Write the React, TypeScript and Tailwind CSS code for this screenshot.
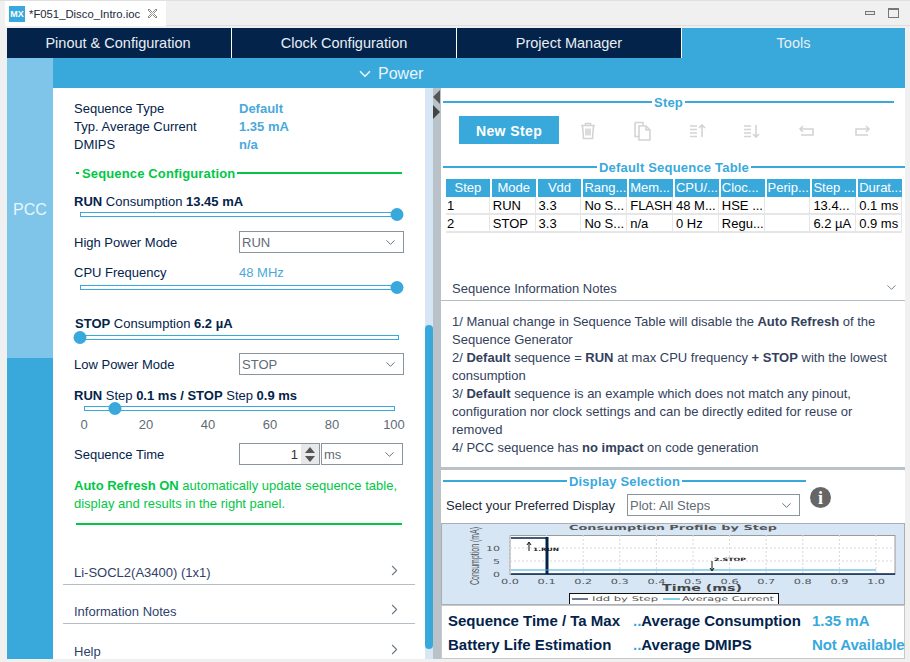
import { ChevronDown, ChevronRight } from "lucide-react";

const columns = ["Step", "Mode", "Vdd", "Rang...", "Mem...", "CPU/...", "Cloc...", "Perip...", "Step ...", "Durat..."];
const rows = [
  ["1", "RUN", "3.3", "No S...", "FLASH", "48 M...", "HSE ...", "", "13.4...", "0.1 ms"],
  ["2", "STOP", "3.3", "No S...", "n/a", "0 Hz", "Regu...", "", "6.2 µA", "0.9 ms"],
];

function Slider({ percent, className }: { percent: number; className: string }) {
  return (
    <div className={`relative h-[5px] border border-[#39a9dc] bg-white ${className}`}>
      <div
        className="absolute top-[-5px] h-[13px] w-[13px] -translate-x-1/2 rounded-full bg-[#39a9dc]"
        style={{ left: `calc(${percent} * (100% + 2px) / 100 - 1px)` }}
      />
    </div>
  );
}

function Select({ value, className }: { value: string; className: string }) {
  return (
    <div className={`flex h-[22px] items-center justify-between border border-[#8a949c] bg-white pl-[2px] pr-[5px] text-[#5f6b76] ${className}`}>
      <span className="pt-[2px]">{value}</span>
      <ChevronDown size={15} strokeWidth={1.5} className="text-[#5f6b76]" />
    </div>
  );
}

function Accordion({ label, border }: { label: string; border: boolean }) {
  return (
    <div className={`mx-[10px] flex h-[39px] items-end justify-between pb-[1px] pl-[11px] pr-[12px] ${border ? "border-b border-[#b4bec4]" : ""}`}>
      <span className="text-[#2f3f6b]">{label}</span>
      <ChevronRight size={17} strokeWidth={1.5} className="mb-[4px] text-[#6f7b85]" />
    </div>
  );
}

function Title({ text, className }: { text: string; className: string }) {
  return (
    <div className={`flex items-center ${className}`}>
      <div className="h-[2px] flex-1 bg-[#39a9dc]" />
      <span className="px-[2px] pt-[2px] font-bold tracking-[0.2px] text-[#39a9dc]">{text}</span>
      <div className="h-[2px] flex-1 bg-[#39a9dc]" />
    </div>
  );
}

function ToolIcon({ kind }: { kind: string }) {
  return (
    <svg width="20" height="20" viewBox="0 0 20 20" fill="none" stroke="#d4d4d4" strokeWidth="1.6">
      {kind === "trash" && <path d="M3 4.500h14M7.500 4.500V2.500h5v2M4.500 4.500l1 13h9l1-13M8 7.500v7M10 7.500v7M12 7.500v7" />}
      {kind === "copy" && <path d="M2 1.500h8v3M2 1.500v14h4M6 5h7l4 4v10H6zM13 5v4h4" />}
      {kind === "up" && <path d="M2 5h7M2 8.500h7M2 12h7M2 15.500h7M14 16V4M11 7l3-3 3 3" />}
      {kind === "down" && <path d="M2 5h7M2 8.500h7M2 12h7M2 15.500h7M14 4v12M11 13l3 3 3-3" />}
      {kind === "undo" && <path d="M6 5L3 8l3 3M3 8h13v6H4" />}
      {kind === "redo" && <path d="M14 5l3 3-3 3M17 8H4v6h12" />}
    </svg>
  );
}

function Chart() {
  const xTicks = Array.from({ length: 11 }, (_, i) => 68 + i * 36.6);
  return (
    <svg width="465" height="80" viewBox="0 0 465 80" className="block">
      <text x="231" y="6" textAnchor="middle" fontFamily="DejaVu Sans" fontSize="7" fontWeight="700" fill="#555" textLength="208" lengthAdjust="spacingAndGlyphs">
        Consumption Profile by Step
      </text>
      <text transform="translate(37 32) rotate(-90)" textAnchor="middle" fontFamily="Liberation Sans" fontSize="12" fill="#555" textLength="58" lengthAdjust="spacingAndGlyphs">
        Consumption (mA)
      </text>
      <rect x="68" y="11.500" width="385" height="39" fill="#fff" stroke="#9a9a9a" />
      {xTicks.map((x) => (
        <line key={x} x1={x} x2={x} y1="11" y2="50" stroke="#d8d8d8" strokeDasharray="2 2" />
      ))}
      <line x1="68" x2="453" y1="24" y2="24" stroke="#d8d8d8" strokeDasharray="2 2" />
      <line x1="68" x2="453" y1="37" y2="37" stroke="#d8d8d8" strokeDasharray="2 2" />
      <line x1="69" x2="105" y1="14" y2="14" stroke="#03234b" strokeWidth="1.500" />
      <line x1="105" x2="105" y1="13" y2="50" stroke="#03234b" strokeWidth="3" />
      <line x1="69" x2="453" y1="50" y2="50" stroke="#03234b" strokeWidth="1.500" />
      <line x1="69" x2="434" y1="46" y2="46" stroke="#39a9dc" strokeWidth="1.200" />
      <path d="M87 27V19M85 21l2-3 2 3" stroke="#111" fill="none" />
      <text x="91" y="27" fontFamily="DejaVu Sans" fontSize="4.500" fontWeight="700" fill="#222" textLength="26" lengthAdjust="spacingAndGlyphs">
        1.RUN
      </text>
      <path d="M270 37V46M268 44l2 3 2-3" stroke="#111" fill="none" />
      <text x="272" y="36.500" fontFamily="DejaVu Sans" fontSize="4.500" fontWeight="700" fill="#222" textLength="32" lengthAdjust="spacingAndGlyphs">
        2.STOP
      </text>
      {[["10", 27], ["5", 40], ["0", 53]].map(([t, y]) => (
        <text key={t} x="58" y={y} textAnchor="end" fontFamily="DejaVu Sans" fontSize="7" fill="#555" textLength={t === "10" ? 14 : 7} lengthAdjust="spacingAndGlyphs">
          {t}
        </text>
      ))}
      {xTicks.map((x, i) => (
        <text key={i} x={x} y="60" textAnchor="middle" fontFamily="DejaVu Sans" fontSize="7" fill="#555" textLength="18" lengthAdjust="spacingAndGlyphs">
          {(i / 10).toFixed(1)}
        </text>
      ))}
      <text x="260" y="67" textAnchor="middle" fontFamily="DejaVu Sans" fontSize="8" fontWeight="700" fill="#444" textLength="80" lengthAdjust="spacingAndGlyphs">
        Time (ms)
      </text>
      <rect x="127.500" y="69.500" width="209" height="12" fill="#fff" stroke="#111" />
      <line x1="130" x2="146" y1="75" y2="75" stroke="#03234b" strokeWidth="1.200" />
      <text x="150" y="77" fontFamily="DejaVu Sans" fontSize="6.500" fill="#555" textLength="66" lengthAdjust="spacingAndGlyphs">
        Idd by Step
      </text>
      <line x1="221" x2="238" y1="75" y2="75" stroke="#39a9dc" strokeWidth="1.200" />
      <text x="240" y="77" fontFamily="DejaVu Sans" fontSize="6.500" fill="#555" textLength="92" lengthAdjust="spacingAndGlyphs">
        Average Current
      </text>
    </svg>
  );
}

export default function App() {
  return (
    <div className="flex h-[662px] w-[910px] flex-col overflow-hidden bg-[#f0f0f0] font-['Liberation_Sans',Arial,sans-serif] text-[13px] leading-[18px] text-[#03234b]">
      {/* editor tab strip */}
      <div className="flex h-[28px] shrink-0 border-t border-[#e0e0e0] pl-[5px]">
        <div className="flex h-[25px] w-[161px] items-center bg-white pl-[4px] text-[11.300px] text-[#1c2a3a]">
          <div className="flex h-[16px] w-[16px] items-center justify-center bg-[#39a9dc] text-[9px] font-bold text-white">MX</div>
          <span className="ml-[4px]">*F051_Disco_Intro.ioc</span>
          <svg width="11" height="11" viewBox="0 0 11 11" className="ml-[7px]" fill="none" stroke="#8a8a8a">
            <path d="M1 2l1-1 3.500 3.500L9 1l1 1-3.500 3.500L10 9l-1 1-3.500-3.500L2 10l-1-1 3.500-3.500z" />
          </svg>
        </div>
        <div className="flex h-[25px] flex-1 items-center justify-end border-b border-[#dcdcdc] pr-[11px]">
          <div className="h-[4px] w-[10px] border border-[#777] bg-[#e8e8e8]" />
          <div className="ml-[13px] h-[10px] w-[11px] border border-[#777] border-t-2" />
        </div>
      </div>

      <div className="flex flex-col pl-[7px] pr-[5px]">
        {/* main tabs */}
        <div className="flex h-[30px] text-[14.500px] text-[#e9eef3]">
          <div className="flex w-[225px] items-center justify-center border-r border-white bg-[#03234b] pr-[2px]">Pinout &amp; Configuration</div>
          <div className="flex w-[225px] items-center justify-center border-r border-white bg-[#03234b]">Clock Configuration</div>
          <div className="flex w-[225px] items-center justify-center border-r border-white bg-[#03234b]">Project Manager</div>
          <div className="flex flex-1 items-center justify-center bg-[#39a9dc]">Tools</div>
        </div>

        <div className="flex h-[601px]">
          {/* PCC rail */}
          <div className="flex w-[46px] shrink-0 flex-col bg-[#39a9dc]">
            <div className="flex h-[300px] items-center justify-center bg-[#7fc5ea] pt-[4px] text-[16px] text-[#e8f5fb]">PCC</div>
          </div>

          <div className="flex min-w-0 flex-1 flex-col">
            <div className="flex h-[30px] shrink-0 items-center bg-[#39a9dc] pl-[303px] pt-[2px] text-[16px] text-[#e9f5fb]">
              <ChevronDown size={18} strokeWidth={2.2} />
              <span className="ml-[4px]">Power</span>
            </div>

            <div className="flex min-h-0 flex-1">
              {/* left panel */}
              <div className="w-[372px] shrink-0 overflow-hidden bg-white pt-[11px] leading-[20px]">
                <div className="pl-[21px] pr-[21px]">
                  <div className="flex h-[18px]"><span className="w-[165px]">Sequence Type</span><b className="text-[#4aa8dc]">Default</b></div>
                  <div className="flex h-[18px]"><span className="w-[165px]">Typ. Average Current</span><b className="text-[#4aa8dc]">1.35 mA</b></div>
                  <div className="flex h-[18px]"><span className="w-[165px]">DMIPS</span><b className="text-[#4aa8dc]">n/a</b></div>

                  <div className="mt-[11px] flex h-[18px] items-center whitespace-nowrap">
                    <div className="ml-[2px] h-[2px] w-[3px] bg-[#00c846]" />
                    <b className="ml-[3px] pt-[2px] tracking-[0.14px] text-[#00c846]">Sequence Configuration</b>
                    <div className="ml-[2px] h-[2px] w-[165px] bg-[#00c846]" />
                  </div>

                  <div className="mt-[10px] h-[18px]"><b>RUN</b> Consumption <b>13.45 mA</b></div>
                  <Slider percent={100} className="ml-[6px] mt-[2px] w-[317px]" />

                  <div className="mt-[14px] flex h-[22px] items-center">
                    <span className="w-[165px] pt-[2px]">High Power Mode</span>
                    <Select value="RUN" className="w-[165px]" />
                  </div>

                  <div className="mt-[10px] flex h-[18px]">
                    <span className="w-[165px]">CPU Frequency</span>
                    <span className="text-[#4aa8dc]">48 MHz</span>
                  </div>
                  <Slider percent={100} className="ml-[6px] mt-[4px] w-[317px]" />

                  <div className="ml-[1px] mt-[24px] h-[18px]"><b>STOP</b> Consumption <b>6.2 µA</b></div>
                  <Slider percent={0} className="ml-[6px] mt-[3px] w-[319px]" />

                  <div className="mt-[13px] flex h-[22px] items-center">
                    <span className="w-[165px] pt-[2px]">Low Power Mode</span>
                    <Select value="STOP" className="w-[165px]" />
                  </div>

                  <div className="mt-[11px] h-[18px]"><b>RUN</b> Step <b>0.1 ms / STOP</b> Step <b>0.9 ms</b></div>
                  <Slider percent={10} className="ml-[10px] mt-[2px] w-[311px]" />
                  <div className="-ml-[21px] mt-[4px] flex h-[18px] w-[372px] text-[#5f6b76]">
                    {["0", "20", "40", "60", "80", "100"].map((t) => (
                      <span key={t} className="w-[62px] shrink-0 text-center">{t}</span>
                    ))}
                  </div>

                  <div className="mt-[10px] flex h-[22px] items-center">
                    <span className="w-[165px] pt-[2px]">Sequence Time</span>
                    <div className="flex h-[22px] w-[81px] items-center justify-end border border-[#8a949c] text-[#333]">
                      <span className="pr-[3px] pt-[2px]">1</span>
                      <div className="flex h-full w-[18px] flex-col items-center justify-center gap-[3px] bg-[#e8e8e8]">
                        <div className="h-0 w-0 border-x-[5px] border-b-[6px] border-x-transparent border-b-[#555]" />
                        <div className="h-0 w-0 border-x-[5px] border-t-[6px] border-x-transparent border-t-[#555]" />
                      </div>
                    </div>
                    <Select value="ms" className="ml-[1px] w-[82px]" />
                  </div>

                  <p className="mt-[12px] leading-[18px] text-[#00c846]"><b>Auto Refresh ON</b> automatically update sequence table, display and results in the right panel.</p>
                  <div className="ml-[2px] mt-[10px] h-[2px] w-[326px] bg-[#00c846]" />
                </div>

                <div className="mt-[21px]">
                  <Accordion label="Li-SOCL2(A3400) (1x1)" border />
                  <Accordion label="Information Notes" border />
                  <Accordion label="Help" border={false} />
                </div>
              </div>

              {/* scrollbar */}
              <div className="flex w-[8px] shrink-0 flex-col bg-[#d6e6f5] pt-[237px]">
                <div className="h-[324px] rounded-[4px] bg-[#39a9dc]" />
              </div>

              {/* sash */}
              <div className="flex w-[8px] shrink-0 flex-col gap-[1px] bg-[#b8c2c8] pt-[2px]">
                <div className="h-0 w-0 border-y-[7px] border-r-[7px] border-y-transparent border-r-[#555]" />
                <div className="h-0 w-0 border-y-[7px] border-l-[7px] border-y-transparent border-l-[#444]" />
              </div>

              {/* right panel */}
              <div className="flex min-w-0 flex-1 flex-col bg-white">
                <div className="h-[379px] shrink-0 overflow-hidden">
                  <Title text="Step" className="ml-[2px] mr-[11px] mt-[5px] h-[18px]" />
                  <div className="ml-[18px] mt-[5px] flex h-[28px] items-center">
                    <div className="flex h-[28px] w-[100px] items-center justify-center bg-[#39a9dc] pt-[1px] text-[14px] font-bold tracking-[0.4px] text-white">New Step</div>
                    <div className="ml-[19px] flex w-[294px] justify-between pt-[2px]">
                      {["trash", "copy", "up", "down", "undo", "redo"].map((k) => (
                        <ToolIcon key={k} kind={k} />
                      ))}
                    </div>
                  </div>

                  <Title text="Default Sequence Table" className="ml-[2px] mt-[14px] h-[18px]" />
                  <div className="ml-[5px] mr-[3px] mt-[3px] grid grid-cols-10 gap-x-[2px]">
                    {columns.map((c, i) => (
                      <div key={i} className={`h-[18px] overflow-hidden whitespace-nowrap bg-[#39a9dc] text-white ${i < 3 ? "text-center" : "pl-[1px]"}`}>{c}</div>
                    ))}
                  </div>
                  {rows.map((row) => (
                    <div key={row[0]} className="ml-[5px] mr-[3px] grid grid-cols-10 gap-x-[2px] border-b-2 border-[#e6e6e6]">
                      {row.map((cell, i) => (
                        <div key={i} className="h-[16px] overflow-hidden whitespace-nowrap border-r border-[#e6e6e6] pl-[1px] leading-[17px] text-black">{cell}</div>
                      ))}
                    </div>
                  ))}

                  <div className="ml-[11px] mr-[6px] mt-[47px] flex h-[18px] items-center justify-between text-[#33415c]">
                    <span>Sequence Information Notes</span>
                    <ChevronDown size={15} strokeWidth={1.5} className="mb-[3px] text-[#6f7b85]" />
                  </div>
                  <div className="mt-[2px] h-px bg-[#b4bec4]" />
                  <div className="pl-[11px] pr-[12px] pt-[12px] text-[#33415c]">
                    <p>1/ Manual change in Sequence Table will disable the <b>Auto Refresh</b> of the Sequence Generator</p>
                    <p>2/ <b>Default</b> sequence = <b>RUN</b> at max CPU frequency <b>+ STOP</b> with the lowest consumption</p>
                    <p>3/ <b>Default</b> sequence is an example which does not match any pinout, configuration nor clock settings and can be directly edited for reuse or removed</p>
                    <p>4/ PCC sequence has <b>no impact</b> on code generation</p>
                  </div>
                </div>

                <div className="h-[3px] shrink-0 bg-[#b8c2c8]" />

                <Title text="Display Selection" className="ml-[2px] mr-[99px] mt-[2px] h-[18px]" />
                <div className="ml-[5px] mt-[4px] flex h-[22px] items-center">
                  <span className="w-[181px] whitespace-nowrap pt-[2px] text-[#1c2a3a]">Select your Preferred Display</span>
                  <Select value="Plot: All Steps" className="w-[173px]" />
                  <div className="mb-[15px] ml-[10px] flex h-[21px] w-[21px] items-center justify-center rounded-full bg-[#666] font-['Liberation_Serif',serif] text-[18px] font-bold text-white">i</div>
                </div>

                <div className="mt-[7px] h-[82px] shrink-0 overflow-hidden border border-[#a8b0b6] bg-[#d6e6f5]">
                  <Chart />
                </div>
                <div className="grid h-[55px] grid-cols-[185px_179px_1fr] content-center gap-y-[6px] whitespace-nowrap border border-[#c8c8c8] pl-[6px] pt-[2px] text-[15px] font-bold leading-[18px]">
                  <span>Sequence Time / Ta Max</span>
                  <span><span className="text-[#39a9dc]">..</span>Average Consumption</span>
                  <span className="text-[#39a9dc]">1.35 mA</span>
                  <span>Battery Life Estimation</span>
                  <span><span className="text-[#39a9dc]">..</span>Average DMIPS</span>
                  <span className="tracking-[-0.1px] text-[#39a9dc]">Not Available</span>
                </div>
              </div>
            </div>
          </div>
        </div>
      </div>
    </div>
  );
}
